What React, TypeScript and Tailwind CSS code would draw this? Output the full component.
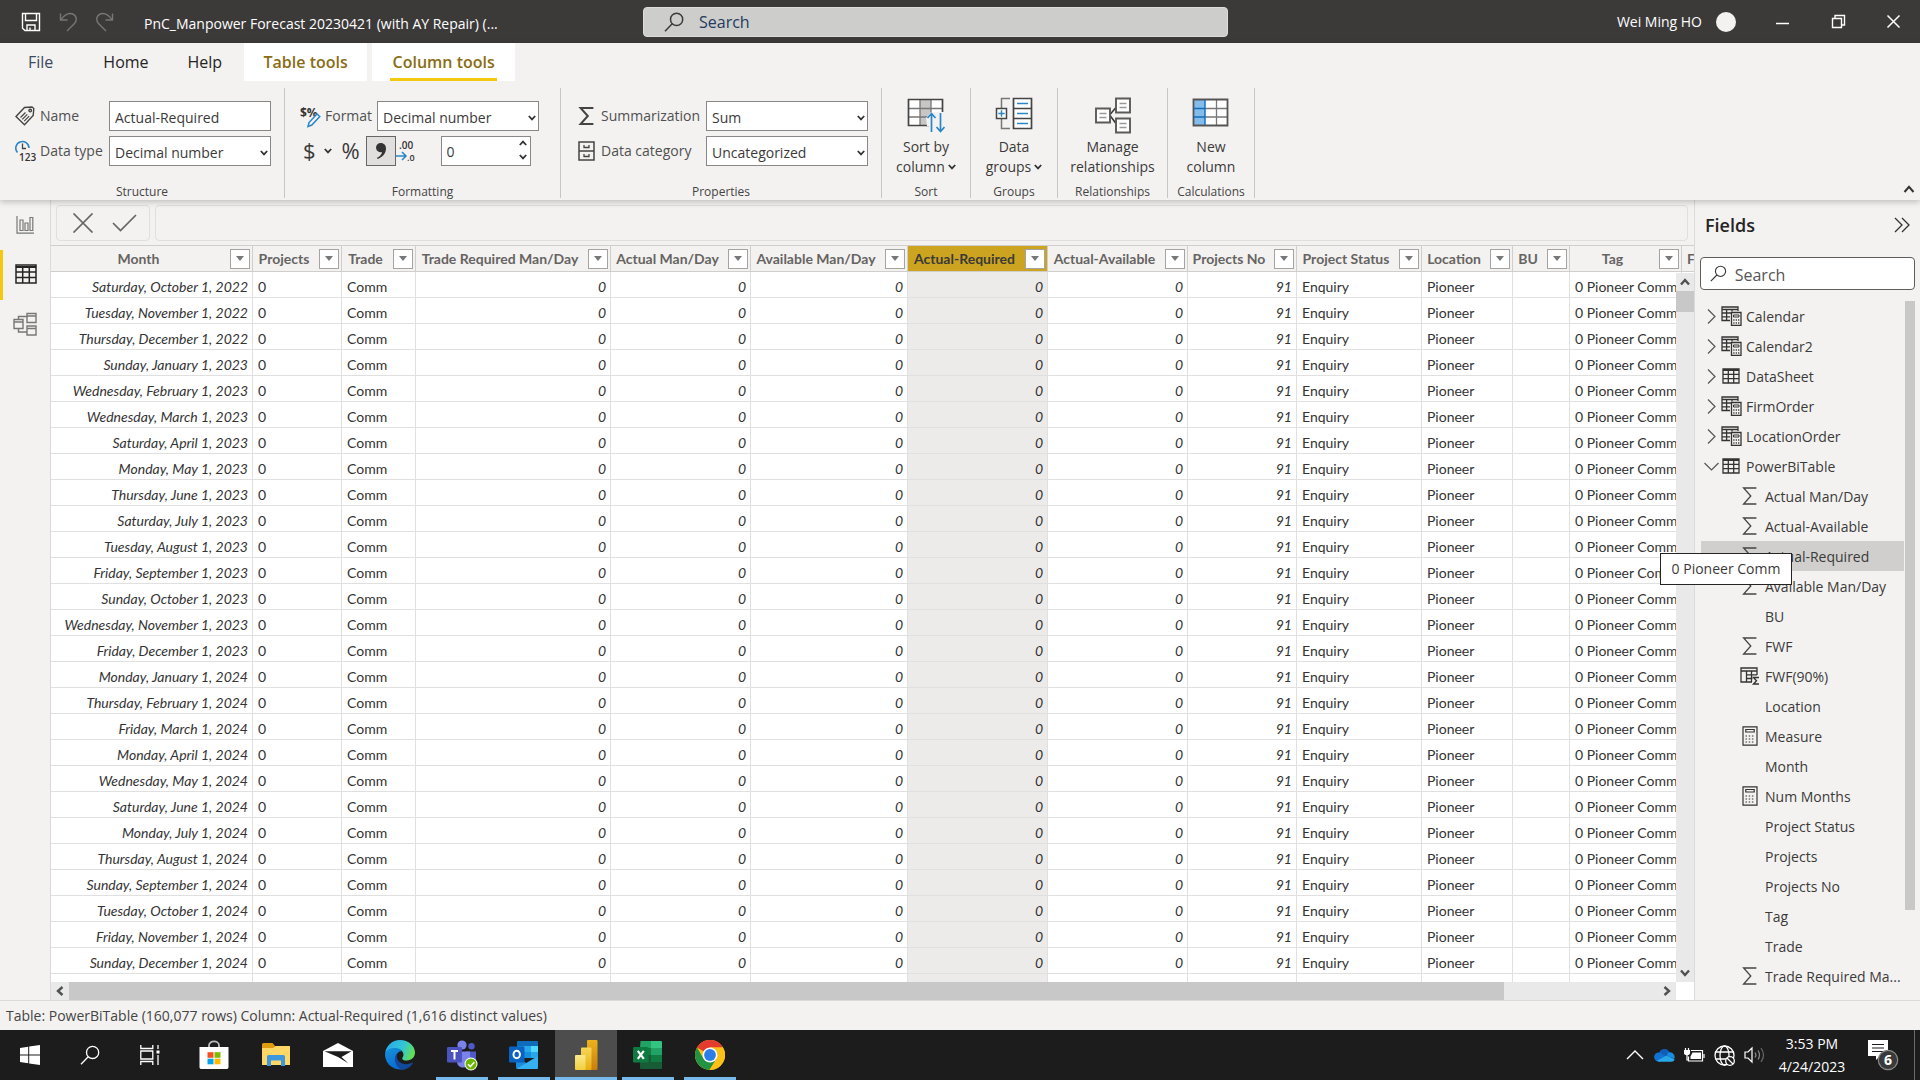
import React from "react";

/* ---------- shared glyphs ---------- */

function Chevron({ className = "" }: { className?: string }) {
  return (
    <svg className={className} width="8" height="6" viewBox="0 0 8 6" fill="none" stroke="#333" strokeWidth="1.8">
      <path d="M0.8 1 4 4.4 7.2 1" />
    </svg>
  );
}

function Sigma({ size = 18, width = 1.3, color = "#444" }: { size?: number; width?: number; color?: string }) {
  return (
    <svg width={size} height={size} viewBox="0 0 18 18" fill="none" stroke={color} strokeWidth={width}>
      <path d="M15.4 1H2.6L9.8 9 2.6 17h12.8" />
    </svg>
  );
}

function Magnifier({ size, color, width = 1.5 }: { size: number; color: string; width?: number }) {
  return (
    <svg width={size} height={size} viewBox="0 0 20 20" fill="none" stroke={color} strokeWidth={width}>
      <circle cx="12.6" cy="7.4" r="6.1" />
      <path d="M8.2 11.8 1 19.2" />
    </svg>
  );
}

/* ---------- title bar ---------- */

function TitleBar() {
  return (
    <header className="grid h-[43px] shrink-0 grid-cols-[1fr_585px_692px] items-center bg-[#3b3a39] text-sm text-white">
      <div className="flex min-w-0 items-center pl-[21px]">
        <button aria-label="Save" className="mr-[18px]">
          <svg width="20" height="20" viewBox="0 0 20 20" fill="none" stroke="#fff" strokeWidth="1.4">
            <path d="M1.5 1.5h17v17H4l-2.5-2.3z" />
            <path d="M4.5 1.5v7h11v-7M6 18.5v-5.5h8v5.5M9 18.5v-3" />
          </svg>
        </button>
        <button aria-label="Undo" className="mr-[17px]">
          <svg width="19" height="20" viewBox="0 0 19 20" fill="none" stroke="#777" strokeWidth="1.4">
            <path d="M1.5 1.5v6.5h7" />
            <path d="M1.8 7.8C5 3.5 9 0.8 13 1.8c4.500 1.2 5.500 6.200 2.500 9.700L8 19" />
          </svg>
        </button>
        <button aria-label="Redo" className="mr-[30px]">
          <svg width="19" height="20" viewBox="0 0 19 20" fill="none" stroke="#777" strokeWidth="1.4">
            <path d="M17.5 1.5v6.5h-7" />
            <path d="M17.2 7.8C14 3.500 10 0.800 6 1.800 1.500 3 0.500 8 3.500 11.500L11 19" />
          </svg>
        </button>
        <span className="truncate pt-1">PnC_Manpower Forecast 20230421 (with AY Repair) (...</span>
      </div>
      <label className="flex h-[30px] items-center rounded-sm border border-[#dddcda] bg-[#cdcdcb] pl-5">
        <Magnifier size={20} color="#3b3a39" />
        <input
          aria-label="Search"
          placeholder="Search"
          className="ml-[15px] min-w-0 flex-1 bg-transparent text-base text-[#243a5e] outline-none placeholder:text-[#243a5e]"
        />
      </label>
      <div className="flex items-center justify-end pr-[19px]">
        <button className="mr-[14px]">Wei Ming HO</button>
        <span className="mr-[39px] h-5 w-5 rounded-full bg-[#f3f2f1]" />
        <button aria-label="Minimize" className="mr-[41px]">
          <svg width="15" height="15" viewBox="0 0 15 15" stroke="#fff" strokeWidth="1.5">
            <path d="M1 9.500h13" />
          </svg>
        </button>
        <button aria-label="Restore" className="mr-[40px]">
          <svg width="15" height="15" viewBox="0 0 15 15" fill="none" stroke="#fff" strokeWidth="1.4">
            <path d="M1.500 4.500h9v9h-9zM4 4V1.500h9.500v9.500H11" />
          </svg>
        </button>
        <button aria-label="Close">
          <svg width="15" height="15" viewBox="0 0 15 15" stroke="#fff" strokeWidth="1.5">
            <path d="M1.500 1.500l12 12M13.500 1.500l-12 12" />
          </svg>
        </button>
      </div>
    </header>
  );
}

/* ---------- ribbon ---------- */

function RibbonTabs() {
  return (
    <nav className="flex h-[38px] items-stretch text-base text-[#252423]">
      <button className="ml-[28px] text-[#3b4a5e]">File</button>
      <button className="ml-[50px]">Home</button>
      <button className="ml-[39px]">Help</button>
      <button className="ml-[22px] w-[123px] bg-white font-semibold text-[#8a6d12]">Table tools</button>
      <button className="relative ml-[5px] w-[143px] bg-white font-semibold text-[#8a6d12]">
        Column tools
        <span className="absolute bottom-0 left-[18px] h-[3px] w-[107px] bg-[#f2c811]" />
      </button>
    </nav>
  );
}

function Group({ title, className, children }: { title: string; className: string; children: React.ReactNode }) {
  return (
    <section className={"flex h-[110px] flex-col border-r border-[#c8c6c4] " + className}>
      <div className="flex-1">{children}</div>
      <h2 className="text-center text-xs leading-3 text-[#444]">{title}</h2>
    </section>
  );
}

function SelectBox({ id, value }: { id: string; value: string }) {
  return (
    <div className="relative">
      <select
        id={id}
        defaultValue={value}
        className="block h-[30px] w-full appearance-none border border-[#8a8886] bg-white px-[5px] pt-[3px] text-sm text-[#3b3a39]"
      >
        <option>{value}</option>
      </select>
      <Chevron className="pointer-events-none absolute right-[3px] top-[14px]" />
    </div>
  );
}

function TagIcon() {
  return (
    <svg width="20" height="20" viewBox="0 0 20 20" fill="none" stroke="#444" strokeWidth="1.4">
      <path d="M1 10.500 9.500 1.500 17 1l1.800 1.500-.6 7L9.500 18.800z" />
      <path d="M5.500 11.500l5-5M7.300 13.300l5-5M9.200 15.200l5-5" strokeWidth="1.2" />
      <circle cx="15.200" cy="4.600" r="1.300" />
    </svg>
  );
}

function DataTypeIcon() {
  return (
    <svg width="21" height="26" viewBox="0 -2 21 26" fill="none">
      <path d="M2.500 12.500A6.600 6.600 0 1 1 14 8" stroke="#2a86c8" strokeWidth="1.600" />
      <path d="M7.500 3.500v5h3.500" stroke="#444" strokeWidth="1.300" />
      <text x="4" y="20.500" fontSize="10" fontWeight="600" fill="#333" fontFamily="Open Sans">123</text>
    </svg>
  );
}

function FormatIcon() {
  return (
    <svg width="21" height="26" viewBox="0 -4 21 26" fill="none">
      <text x="0" y="10" fontSize="12" fontWeight="700" fill="#333" fontFamily="Open Sans">$%</text>
      <path d="M8 19.500l1-4 8-8.500 2.800 2.500-8 8.500z" fill="#f3f2f1" stroke="#2a86c8" strokeWidth="1.500" />
    </svg>
  );
}

function CabinetIcon() {
  return (
    <svg width="17" height="20" viewBox="0 0 17 20" fill="none" stroke="#444" strokeWidth="1.5">
      <path d="M1 1h15v18H1zM1 10h15" />
      <path d="M6 4v2.500h5V4M6 13v2.500h5V13" strokeWidth="1.3" />
    </svg>
  );
}

function SortIcon() {
  return (
    <svg width="38" height="36" viewBox="0 0 38 36" fill="none">
      <path d="M1.500 2.500h34v26h-34z" fill="#fff" />
      <path d="M13 2h11v27H13z" fill="#c8c6c4" />
      <path d="M1.500 11.500h34M1.500 20h34M13 2v27M24 2v27" stroke="#777" strokeWidth="1.3" />
      <path d="M24 28.500H1.500v-26h34V16" stroke="#444" strokeWidth="1.7" />
      <path d="M19 21l5-6h13v21H22v-7h-2z" fill="#f3f2f1" />
      <path d="M24.500 35V16.500M20.500 21l4-4.500 4 4.500M33.500 16v18M29.500 30l4 4.500 4-4.500" stroke="#2a86c8" strokeWidth="1.7" />
    </svg>
  );
}

function GroupsIcon() {
  return (
    <svg width="38" height="36" viewBox="0 0 38 36" fill="none">
      <path d="M15 1.500H6.500v30H15" stroke="#777" strokeWidth="1.5" />
      <path d="M18.500 1.500h18v30h-18z" fill="#fff" stroke="#444" strokeWidth="1.7" />
      <path d="M18.500 11.500h18M18.500 21.500h18" stroke="#444" strokeWidth="1.7" />
      <path d="M22 6.500h11M22 16.500h11M22 26.500h11" stroke="#2a86c8" strokeWidth="1.5" />
      <path d="M1.500 11.500h10v10h-10z" fill="#fff" stroke="#444" strokeWidth="1.5" />
      <path d="M6.500 13.300v6.400M3.300 16.500h6.400" stroke="#2a86c8" strokeWidth="1.5" />
    </svg>
  );
}

function RelationsIcon() {
  return (
    <svg width="38" height="38" viewBox="0 0 38 38" fill="none" stroke="#5c5a58" strokeWidth="1.9">
      <path d="M16 17.500l6-7M16 18.500l6 8" stroke="#333" strokeWidth="1.5" />
      <path d="M2 11.500h14v14H2zM22 1.500h14v14H22zM22 21.500h14v14H22z" fill="#fff" />
      <path d="M5.500 16.500h7M5.500 20.500h7M25.500 6.500h7M25.500 10.500h7M25.500 26.500h7M25.500 30.500h7" stroke="#999" strokeWidth="1.3" />
    </svg>
  );
}

function NewColumnIcon() {
  return (
    <svg width="38" height="36" viewBox="0 0 38 36" fill="none">
      <path d="M1.500 2.500h34v26h-34z" fill="#fff" />
      <path d="M2 3h11v25H2z" fill="#84bdec" />
      <path d="M13 11.500h22.500M13 20h22.500M24.500 2v26.500" stroke="#777" strokeWidth="1.3" />
      <path d="M1.500 2.500h34v26h-34z" stroke="#555" strokeWidth="1.8" />
      <path d="M2 11.500h11M2 20h11M13 3v25" stroke="#0f6cbd" strokeWidth="1.4" />
    </svg>
  );
}

function BigButton({ icon, lines, menu }: { icon: React.ReactNode; lines: [string, string]; menu?: boolean }) {
  return (
    <button className="flex w-full flex-col items-center pt-[9px] text-sm leading-5 text-[#3b3a39]">
      <span className="flex h-10 items-start">{icon}</span>
      <span>{lines[0]}</span>
      <span className="flex items-center gap-[3px]">
        {lines[1]}
        {menu && <Chevron />}
      </span>
    </button>
  );
}

function Ribbon() {
  return (
    <div className="relative z-10 flex shrink-0 flex-col bg-[#f3f2f1] shadow-[0_2px_6px_rgba(0,0,0,0.22)]">
      <RibbonTabs />
      <div className="flex h-[119px] items-start pt-[7px]">
        <Group title="Structure" className="w-[285px]">
          <div className="grid grid-cols-[94px_162px] gap-y-[5px] pl-[15px] pt-[13px] text-sm text-[#505050]">
            <label htmlFor="name" className="flex h-[30px] items-center gap-[5px]"><TagIcon />Name</label>
            <input id="name" defaultValue="Actual-Required" className="h-[30px] min-w-0 border border-[#8a8886] bg-white px-[5px] pt-[3px] text-[#3b3a39]" />
            <label htmlFor="dtype" className="flex h-[30px] items-center gap-1 whitespace-nowrap"><DataTypeIcon />Data type</label>
            <SelectBox id="dtype" value="Decimal number" />
          </div>
        </Group>
        <Group title="Formatting" className="w-[276px]">
          <div className="grid grid-cols-[77px_162px] gap-y-[5px] pl-[15px] pt-[13px] text-sm text-[#505050]">
            <label htmlFor="format" className="flex h-[30px] items-center gap-1"><FormatIcon />Format</label>
            <SelectBox id="format" value="Decimal number" />
            <div className="col-span-2 flex h-[30px] items-center text-[#3b3a39]">
              <button aria-label="Currency" className="flex items-center gap-[8px] pl-[3px] text-[22px]">
                $<Chevron />
              </button>
              <button aria-label="Percentage" className="ml-[9px] w-[20px] text-[22px]">%</button>
              <button aria-label="Thousands separator" className="ml-[5px] flex h-[30px] w-[30px] items-center justify-center border border-[#666] bg-[#e1dfdd]">
                <svg width="12" height="18" viewBox="0 0 12 18" fill="#333">
                  <path d="M1 5.500a4.600 4.600 0 0 1 4.800-4.500C9 1 11 3.300 11 6.500c0 5-3.500 8.800-8.500 10.500l-.5-1.200c3-1.400 4.800-3.400 5-5.900A4.600 4.600 0 0 1 1 5.500z" />
                </svg>
              </button>
              <svg width="20" height="28" viewBox="0 -3 20 28" fill="none">
                <text x="3" y="9" fontSize="10" fontWeight="600" fill="#333" fontFamily="Open Sans">.00</text>
                <text x="11" y="21" fontSize="9" fontWeight="600" fill="#333" fontFamily="Open Sans">.0</text>
                <path d="M0 16h9.500M6 12l4 4-4 4" stroke="#2a86c8" strokeWidth="1.6" />
              </svg>
              <div className="relative ml-[25px]">
                <input aria-label="Decimal places" defaultValue="0" className="block h-[30px] w-[90px] border border-[#8a8886] bg-white px-[5px]" />
                <div className="absolute right-[4px] top-[4px] flex flex-col gap-[8px]">
                  <button aria-label="Increase" className="rotate-180"><Chevron /></button>
                  <button aria-label="Decrease"><Chevron /></button>
                </div>
              </div>
            </div>
          </div>
        </Group>
        <Group title="Properties" className="w-[321px]">
          <div className="grid grid-cols-[128px_162px] gap-y-[5px] pl-[17px] pt-[13px] text-sm text-[#505050]">
            <label htmlFor="sum" className="flex items-center gap-[5px]"><Sigma width={2} size={18} />Summarization</label>
            <SelectBox id="sum" value="Sum" />
            <label htmlFor="cat" className="flex items-center gap-[6px]"><CabinetIcon />Data category</label>
            <SelectBox id="cat" value="Uncategorized" />
          </div>
        </Group>
        <Group title="Sort" className="w-[89px]"><BigButton icon={<SortIcon />} lines={["Sort by", "column"]} menu /></Group>
        <Group title="Groups" className="w-[87px]"><BigButton icon={<GroupsIcon />} lines={["Data", "groups"]} menu /></Group>
        <Group title="Relationships" className="w-[110px]"><BigButton icon={<RelationsIcon />} lines={["Manage", "relationships"]} /></Group>
        <Group title="Calculations" className="w-[87px]"><BigButton icon={<NewColumnIcon />} lines={["New", "column"]} /></Group>
        <button aria-label="Collapse ribbon" className="mb-[6px] ml-auto mr-[5px] self-end">
          <svg width="12" height="10" viewBox="0 0 12 10" fill="none" stroke="#333" strokeWidth="2">
            <path d="M1.500 8 6 2.800 10.500 8" />
          </svg>
        </button>
      </div>
    </div>
  );
}

/* ---------- left navigation ---------- */

function ViewRail() {
  return (
    <nav className="flex w-[51px] shrink-0 flex-col border-r border-[#dcdad8] text-[#777]">
      <button aria-label="Report view" className="flex h-[50px] items-center justify-center pb-px">
        <svg width="18" height="18" viewBox="0 0 18 18" fill="none" stroke="currentColor" strokeWidth="1.2">
          <path d="M1 0v17.200h17M4 14.500V4h3v10.500zM9 14.500V7h3v7.500zM14 14.500V1.500h2.800v13z" />
        </svg>
      </button>
      <button aria-label="Data view" className="flex h-[50px] items-center justify-center border-l-[3px] border-[#f2c811] pb-[3px] pr-[2px] text-[#252423]">
        <svg width="22" height="20" viewBox="0 0 22 20" fill="none" stroke="currentColor" strokeWidth="1.5">
          <path d="M1 1h20v18H1z" />
          <path d="M1 3h20" strokeWidth="2" />
          <path d="M1 8h20M1 13.500h20M7.700 4v15M14.300 4v15" />
        </svg>
      </button>
      <button aria-label="Model view" className="flex h-[50px] items-center justify-center pb-[2px]">
        <svg width="24" height="24" viewBox="0 0 24 24" fill="none" stroke="currentColor" strokeWidth="1.4">
          <path d="M1 7.500h9v9H1zM14 1.500h9v9h-9zM14 14h9v9h-9zM1 10h9M14 4h9M14 16.500h9" />
          <path d="M5.500 7.500V4.500H14M5.500 16.500V20H14" />
        </svg>
      </button>
    </nav>
  );
}

/* ---------- data grid ---------- */

const columns: { name: string; width: string; kind: "date" | "text" | "num" }[] = [
  { name: "Month", width: "w-[202px]", kind: "date" },
  { name: "Projects", width: "w-[89px]", kind: "text" },
  { name: "Trade", width: "w-[74px]", kind: "text" },
  { name: "Trade Required Man/Day", width: "w-[195px]", kind: "num" },
  { name: "Actual Man/Day", width: "w-[140px]", kind: "num" },
  { name: "Available Man/Day", width: "w-[157px]", kind: "num" },
  { name: "Actual-Required", width: "w-[140px]", kind: "num" },
  { name: "Actual-Available", width: "w-[140px]", kind: "num" },
  { name: "Projects No", width: "w-[109px]", kind: "num" },
  { name: "Project Status", width: "w-[125px]", kind: "text" },
  { name: "Location", width: "w-[91px]", kind: "text" },
  { name: "BU", width: "w-[57px]", kind: "text" },
  { name: "Tag", width: "w-[112px]", kind: "text" },
];

const months = [
  "Saturday, October 1, 2022", "Tuesday, November 1, 2022", "Thursday, December 1, 2022",
  "Sunday, January 1, 2023", "Wednesday, February 1, 2023", "Wednesday, March 1, 2023",
  "Saturday, April 1, 2023", "Monday, May 1, 2023", "Thursday, June 1, 2023",
  "Saturday, July 1, 2023", "Tuesday, August 1, 2023", "Friday, September 1, 2023",
  "Sunday, October 1, 2023", "Wednesday, November 1, 2023", "Friday, December 1, 2023",
  "Monday, January 1, 2024", "Thursday, February 1, 2024", "Friday, March 1, 2024",
  "Monday, April 1, 2024", "Wednesday, May 1, 2024", "Saturday, June 1, 2024",
  "Monday, July 1, 2024", "Thursday, August 1, 2024", "Sunday, September 1, 2024",
  "Tuesday, October 1, 2024", "Friday, November 1, 2024", "Sunday, December 1, 2024",
];

const rows = months.map((m) => [m, "0", "Comm", "0", "0", "0", "0", "0", "91", "Enquiry", "Pioneer", "", "0 Pioneer Comm"]);
rows.push(columns.map(() => ""));

function ScrollArrow({ label, turn }: { label: string; turn: string }) {
  return (
    <button aria-label={label} className="flex h-[18px] w-[18px] shrink-0 items-center justify-center">
      <svg className={turn} width="10" height="8" viewBox="0 0 10 8" fill="none" stroke="#505050" strokeWidth="2.4">
        <path d="M1 6.500 5 2l4 4.500" />
      </svg>
    </button>
  );
}

function DataGrid() {
  return (
    <div className="mt-[4px] flex min-h-0 flex-1 flex-col">
      <div className="relative min-h-0 flex-1 overflow-hidden bg-white font-['Lato','Open_Sans',sans-serif]">
        <table className="w-[1831px] table-fixed border-separate border-spacing-0 text-sm leading-5">
          <colgroup>
            {columns.map((c) => <col key={c.name} className={c.width} />)}
            <col className="w-[200px]" />
          </colgroup>
          <thead>
            <tr>
              {columns.map((c) => (
                <th
                  key={c.name}
                  className={
                    "h-[27px] border-y border-r border-[#d0cecc] p-0 font-bold " +
                    (c.name === "Actual-Required" ? "bg-[#cca420] text-[#3b3a39]" : "bg-[#f3f2f1] text-[#666462]")
                  }
                >
                  <div className="flex items-center pr-[2px]">
                    <span className="flex-1 whitespace-nowrap pr-1 text-center">{c.name}</span>
                    <button aria-label={"Filter " + c.name} className="flex h-[20px] w-[20px] items-center justify-center border border-[#a6a4a2] bg-white">
                      <svg width="8" height="5" viewBox="0 0 8 5" fill="#777"><path d="M0 0h8L4 5z" /></svg>
                    </button>
                  </div>
                </th>
              ))}
              <th className="border-y border-[#d0cecc] bg-[#f3f2f1] p-0 pl-[5px] text-left font-bold text-[#666462]">F</th>
            </tr>
          </thead>
          <tbody className="text-[#333]">
            {rows.map((r, i) => (
              <tr key={i}>
                {r.map((v, j) => (
                  <td
                    key={j}
                    className={
                      "h-[26px] whitespace-nowrap border-b border-r border-[#e0e0e0] p-0 pt-[4px] " +
                      (columns[j].kind === "text" ? "pl-[5px] " : "pr-[4px] text-right italic ") +
                      (j === 6 ? "bg-[#ecebea]" : "bg-white")
                    }
                  >
                    {v}
                  </td>
                ))}
              </tr>
            ))}
          </tbody>
        </table>
        <div className="absolute bottom-0 right-0 top-[28px] flex w-[18px] flex-col bg-[#e9e9e9]">
          <ScrollArrow label="Scroll up" turn="" />
          <div className="h-[21px] bg-[#c8c8c8]" />
          <div className="flex-1" />
          <ScrollArrow label="Scroll down" turn="rotate-180" />
        </div>
      </div>
      <div className="flex h-[18px] shrink-0 bg-white pr-[18px]">
        <div className="flex flex-1 bg-[#e9e9e9]">
          <ScrollArrow label="Scroll left" turn="-rotate-90" />
          <div className="flex flex-1"><div className="w-[90.3%] bg-[#c8c8c8]" /></div>
          <ScrollArrow label="Scroll right" turn="rotate-90" />
        </div>
      </div>
    </div>
  );
}

function Workspace() {
  return (
    <main className="flex min-w-0 flex-1 flex-col">
      <div className="mt-[5px] flex h-[36px] shrink-0 gap-[5px] pl-[5px] pr-[6px]">
        <div className="flex w-[94px] items-center gap-[18px] rounded-sm border border-[#e1dfdd] pl-[15px]">
          <button aria-label="Cancel">
            <svg width="22" height="20" viewBox="0 0 22 20" stroke="#666" strokeWidth="1.7"><path d="M1.500 0.500l19 19M20.500 0.500l-19 19" /></svg>
          </button>
          <button aria-label="Commit">
            <svg width="25" height="18" viewBox="0 0 25 18" fill="none" stroke="#666" strokeWidth="1.7"><path d="M1 9l7.500 7.500L24 1" /></svg>
          </button>
        </div>
        <input aria-label="Formula" className="min-w-0 flex-1 rounded-sm border border-[#e1dfdd] bg-transparent" />
      </div>
      <DataGrid />
    </main>
  );
}

/* ---------- fields pane ---------- */

function TableIcon() {
  return (
    <svg width="18" height="16" viewBox="0 0 18 16" fill="none" stroke="#333" strokeWidth="1.3">
      <path d="M1 1h16v14H1z" />
      <path d="M1 2h16" strokeWidth="2" />
      <path d="M1 6.300h16M1 10.600h16M6.300 2v13M11.700 2v13" />
    </svg>
  );
}

function CalcTableIcon() {
  return (
    <svg width="21" height="20" viewBox="0 0 21 20" fill="none" stroke="#333" strokeWidth="1.3">
      <path d="M17 5V1H1v13.500h8M1 3.500h16M1 7h9M1 10.800h8M5.600 3.500v11M11 3.500v2" />
      <path d="M10.500 6.500h9.500v13h-9.500z" fill="#f3f2f1" />
      <path d="M12.500 9h5.500v2h-5.500z" strokeWidth="1" />
      <path d="M12.300 14h6M12.300 17h6" strokeDasharray="1.2 1.2" />
    </svg>
  );
}

function CalculatorIcon() {
  return (
    <svg width="16" height="20" viewBox="0 0 16 20" fill="none" stroke="#333" strokeWidth="1.2">
      <path d="M1 .8h14v18.400H1zM3.800 3.500h8.400v2.500H3.800z" />
      <path d="M3.500 10h9.500M3.500 13h9.500M3.500 16h9.500" strokeDasharray="1.5 1.7" />
    </svg>
  );
}

function CalcColumnIcon() {
  return (
    <svg width="20" height="18" viewBox="0 0 20 18" fill="none" stroke="#333" strokeWidth="1.3">
      <path d="M17 8V1H1v14h11M1 4h16M6.500 4v11M11.500 4v11M6.500 7.800H17M6.500 11.500h6" />
      <path d="M19 10.500h-5.500l3 3.200-3 3.300H19" strokeWidth="1.4" />
    </svg>
  );
}

const tables: [string, "calc" | "table"][] = [
  ["Calendar", "calc"], ["Calendar2", "calc"], ["DataSheet", "table"],
  ["FirmOrder", "calc"], ["LocationOrder", "calc"], ["PowerBiTable", "table"],
];

const fields: [string, "sum" | "column" | "measure" | "none"][] = [
  ["Actual Man/Day", "sum"], ["Actual-Available", "sum"], ["Actual-Required", "sum"],
  ["Available Man/Day", "sum"], ["BU", "none"], ["FWF", "sum"], ["FWF(90%)", "column"],
  ["Location", "none"], ["Measure", "measure"], ["Month", "none"], ["Num Months", "measure"],
  ["Project Status", "none"], ["Projects", "none"], ["Projects No", "none"], ["Tag", "none"],
  ["Trade", "none"], ["Trade Required Ma...", "sum"],
];

function FieldsPane() {
  return (
    <aside className="relative flex w-[226px] shrink-0 flex-col border-l border-[#dcdad8] text-[#3b3a39]">
      <div className="flex h-[57px] shrink-0 items-center justify-between pb-[7px] pl-[10px] pr-[10px]">
        <h2 className="text-lg font-semibold text-[#252423]">Fields</h2>
        <button aria-label="Collapse pane">
          <svg width="16" height="16" viewBox="0 0 16 16" fill="none" stroke="#333" strokeWidth="1.3">
            <path d="M1 1l7 7-7 7M8 1l7 7-7 7" />
          </svg>
        </button>
      </div>
      <label className="mx-[5px] flex h-[33px] shrink-0 items-center rounded-sm border border-[#605e5c] bg-white pl-[9px]">
        <Magnifier size={19} color="#333" width={1.3} />
        <input aria-label="Search fields" placeholder="Search" className="ml-[8px] w-full min-w-0 bg-transparent pt-[2px] text-base outline-none placeholder:text-[#555]" />
      </label>
      <div className="mt-[11px] flex min-h-0 flex-1 pl-[6px] pr-[5px]">
        <ul className="min-w-0 flex-1 text-sm">
          {tables.map(([name, kind], i) => (
            <li key={name}>
              <button className="flex h-[30px] w-full items-center">
                <span className="flex w-[20px] justify-center">
                  {i === 5 ? (
                    <svg width="15" height="9" viewBox="0 0 15 9" fill="none" stroke="#555" strokeWidth="1.2"><path d="M.5 1l7 7 7-7" /></svg>
                  ) : (
                    <svg width="9" height="15" viewBox="0 0 9 15" fill="none" stroke="#555" strokeWidth="1.2"><path d="M1 .5l7 7-7 7" /></svg>
                  )}
                </span>
                <span className="flex w-[25px]">{kind === "calc" ? <CalcTableIcon /> : <span className="pl-px"><TableIcon /></span>}</span>
                <span className="pt-px">{name}</span>
              </button>
            </li>
          ))}
          {fields.map(([name, kind]) => (
            <li key={name}>
              <button className={"flex h-[30px] w-full items-center whitespace-nowrap pl-[39px] " + (name === "Actual-Required" ? "bg-[#d0cfcd]" : "")}>
                <span className="mr-[5px] flex w-[20px] shrink-0 justify-center">
                  {kind === "sum" && <Sigma />}
                  {kind === "measure" && <CalculatorIcon />}
                  {kind === "column" && <CalcColumnIcon />}
                </span>
                <span className="pt-px">{name}</span>
              </button>
            </li>
          ))}
        </ul>
        <div className="ml-px h-[609px] w-[10px] bg-[#c8c8c8]" />
      </div>
      <div role="tooltip" className="absolute left-[-35px] top-[353px] flex h-[32px] w-[132px] items-center justify-center whitespace-nowrap border border-[#252423] bg-white text-sm">
        0 Pioneer Comm
      </div>
    </aside>
  );
}

/* ---------- taskbar ---------- */

function WindowsIcon() {
  return (
    <svg width="20" height="20" viewBox="0 0 20 20" fill="#fff">
      <path d="M0 3l8.200-1.200v7.700H0zM9.200 1.600 20 0v9.500H9.200zM0 10.500h8.200v7.700L0 17zM9.200 10.500H20V20L9.200 18.400z" />
    </svg>
  );
}

function TaskViewIcon() {
  return (
    <svg width="20" height="20" viewBox="0 0 20 20" fill="none" stroke="#fff" strokeWidth="1.3">
      <path d="M.8 0v3.500h12V0M.8 6h12v8h-12zM.8 20v-3.500h12V20M18 0v4M18 10v10" />
      <path d="M16.500 5.500h3v3h-3z" fill="#fff" stroke="none" />
    </svg>
  );
}

function StoreIcon() {
  return (
    <svg width="30" height="30" viewBox="0 0 30 30">
      <path d="M10 8V5.500C10 0 20 0 20 5.500V8" fill="none" stroke="#bbb" strokeWidth="1.8" />
      <path d="M.5 7h29v20.500a2 2 0 0 1-2 1.500h-25a2 2 0 0 1-2-1.500z" fill="#fff" />
      <path d="M8.500 12.200h6v5.600h-6z" fill="#f25022" />
      <path d="M15.500 12.200h6v5.600h-6z" fill="#7fba00" />
      <path d="M8.500 18.700h6v5.600h-6z" fill="#00a4ef" />
      <path d="M15.500 18.700h6v5.600h-6z" fill="#ffb900" />
    </svg>
  );
}

function FolderIcon() {
  return (
    <svg width="28" height="24" viewBox="0 0 28 24">
      <path d="M0 1.500A1.500 1.500 0 0 1 1.500 0h9L13 3h15v4H0z" fill="#e09c0f" />
      <path d="M0 5h11l3-2h13a1 1 0 0 1 1 1v18H0z" fill="#ffd766" />
      <path d="M5 23V13.500a1.500 1.500 0 0 1 1.500-1.500h15a1.500 1.500 0 0 1 1.500 1.500V23h-4v-5.500H9V23z" fill="#3d97dc" />
    </svg>
  );
}

function MailIcon() {
  return (
    <svg width="30" height="24" viewBox="0 0 30 24">
      <path d="M0 8 15 0l15 8v16H0z" fill="#fff" />
      <path d="M1.500 8.300h27L18.500 14l7 6.500L15 14z" fill="#1c1c1c" />
    </svg>
  );
}

function EdgeIcon() {
  return (
    <svg width="30" height="30" viewBox="0 0 30 30">
      <defs>
        <linearGradient id="edgeTop" x1="0" y1="0.3" x2="1" y2="0.6">
          <stop offset="0" stopColor="#2aa9ea" /><stop offset="0.55" stopColor="#32c6d6" /><stop offset="1" stopColor="#66e04a" />
        </linearGradient>
        <linearGradient id="edgeBody" x1="0" y1="0" x2="0.5" y2="1">
          <stop offset="0" stopColor="#1592dc" /><stop offset="1" stopColor="#0a6bd0" />
        </linearGradient>
      </defs>
      <path d="M.2 13.500C.8 6 7 0 15 0c8.500 0 15 6 15 12.600 0 5-3.800 7.900-8 7.900-3.300 0-4.800-1.200-4.800-2.100 0-.8 1.300-1.300 1.300-3.800 0-3-3-5.800-7-5.800C5.500 8.800 1.500 11 .2 13.500z" fill="url(#edgeTop)" />
      <path d="M0 15C0 10.500 5 7.500 9.500 8c3.500 0 6 1.200 7.500 3-3.500 0-6.800 3.500-6.500 8 .4 5.500 5 9.500 9.500 9.600A15 15 0 0 1 0 15z" fill="url(#edgeBody)" />
      <path d="M12 13.500c-3.500 4-3 12 4.500 16.400 4.500 0 9-2.500 11.300-6.600.2-.5-.2-.7-.6-.5-6 3-13.700 1-15.200-4.500-.4-1.600-.3-3.300 0-4.800z" fill="#114a9c" />
    </svg>
  );
}

function TeamsIcon() {
  return (
    <svg width="32" height="32" viewBox="0 0 32 32">
      <circle cx="16" cy="6" r="4.6" fill="#7b83eb" />
      <circle cx="25.500" cy="7.300" r="3.200" fill="#5059c9" />
      <path d="M20 12.500h10v8a5 5 0 0 1-10 3z" fill="#5059c9" />
      <path d="M11 12.500h13v10c0 4-3 6-6.500 6s-6.500-2-6.500-6z" fill="#7b83eb" />
      <rect x="1" y="8" width="15" height="15.500" rx="1.300" fill="#4b53bc" />
      <path d="M5 12h7M8.500 12v8.500" stroke="#fff" strokeWidth="2" />
      <circle cx="25" cy="25" r="6.500" fill="#fff" />
      <circle cx="25" cy="25" r="5.500" fill="#6bb700" />
      <path d="M22 25.200l2.300 2.300 4-4.200" fill="none" stroke="#fff" strokeWidth="1.6" />
    </svg>
  );
}

function OutlookIcon() {
  return (
    <svg width="30" height="28" viewBox="0 0 30 28">
      <path d="M8 1a1 1 0 0 1 1-1h19a1 1 0 0 1 1 1v16H8z" fill="#0f6cbd" />
      <path d="M8 5h7v6H8zM15 11h7v6h-7z" fill="#1490df" />
      <path d="M15 5h7v6h-7z" fill="#28a8ea" />
      <path d="M22 5h7v6h-7z" fill="#50d9ff" />
      <path d="M22 11h7v6h-7z" fill="#28a8ea" />
      <path d="M7 16l11 6.500L29 15v11.500a1.500 1.500 0 0 1-1.500 1.500h-19A1.500 1.500 0 0 1 7 26.500z" fill="#1a8bdd" />
      <path d="M8 27.500 29 15v11.500a1.500 1.500 0 0 1-1.500 1.500h-19z" fill="#35b1f1" />
      <rect x="0" y="5.500" width="15.500" height="16" rx="1.300" fill="#0a63c0" />
      <ellipse cx="7.700" cy="13.500" rx="3.200" ry="3.800" fill="none" stroke="#fff" strokeWidth="2" />
    </svg>
  );
}

function PowerBiIcon() {
  return (
    <svg width="24" height="30" viewBox="0 0 24 30">
      <defs>
        <linearGradient id="pbBack" x1="0" y1="0" x2="0" y2="1"><stop offset="0" stopColor="#ecb31b" /><stop offset="1" stopColor="#c87d0e" /></linearGradient>
        <linearGradient id="pbMid" x1="0" y1="0" x2="0" y2="1"><stop offset="0" stopColor="#f8d659" /><stop offset="1" stopColor="#e6ad10" /></linearGradient>
        <linearGradient id="pbFront" x1="0" y1="0" x2="0" y2="1"><stop offset="0" stopColor="#fae88a" /><stop offset="1" stopColor="#f2ce3c" /></linearGradient>
      </defs>
      <rect x="13" y="0" width="10.5" height="30" rx="1" fill="url(#pbBack)" />
      <rect x="7" y="7.5" width="10.5" height="22.5" rx="1" fill="url(#pbMid)" />
      <rect x="1" y="15" width="10.5" height="15" rx="1" fill="url(#pbFront)" />
    </svg>
  );
}

function ExcelIcon() {
  return (
    <svg width="30" height="28" viewBox="0 0 30 28">
      <path d="M7.500 0H18v7H7z" fill="#21a366" />
      <path d="M18 0h10a1 1 0 0 1 1 1v6H18z" fill="#33c481" />
      <path d="M7 7h11v7H7z" fill="#107c41" />
      <path d="M18 7h11v7H18z" fill="#21a366" />
      <path d="M7 14h11v7H7z" fill="#185c37" />
      <path d="M18 14h11v7H18z" fill="#107c41" />
      <path d="M7 21h22v6a1 1 0 0 1-1 1H8a1 1 0 0 1-1-1z" fill="#185c37" />
      <rect x="0" y="6" width="15.5" height="15.5" rx="1.3" fill="#0f7a40" />
      <path d="M4.800 9.800l6 8M10.800 9.800l-6 8" stroke="#fff" strokeWidth="2.2" />
    </svg>
  );
}

function ChromeIcon() {
  return (
    <svg width="30" height="30" viewBox="0 0 30 30">
      <circle cx="15" cy="15" r="15" fill="#fbc116" />
      <path d="M15 15 2 7.500A15 15 0 0 1 28 7.500H15z" fill="#e33b2e" />
      <path d="M2 7.500A15 15 0 0 0 14.500 30L21.500 18.700 8.500 18.700z" fill="#229342" />
      <path d="M28 7.500H15l6.500 11.200L14.500 30A15 15 0 0 0 28 7.500z" fill="#fbc116" />
      <circle cx="15" cy="15" r="7.5" fill="#fff" />
      <circle cx="15" cy="15" r="5.9" fill="#2b7de9" />
    </svg>
  );
}

const apps: { name: string; icon: React.ReactNode; state: "idle" | "open" | "active" }[] = [
  { name: "Microsoft Store", icon: <StoreIcon />, state: "idle" },
  { name: "File Explorer", icon: <FolderIcon />, state: "idle" },
  { name: "Mail", icon: <MailIcon />, state: "idle" },
  { name: "Edge", icon: <EdgeIcon />, state: "idle" },
  { name: "Teams", icon: <TeamsIcon />, state: "open" },
  { name: "Outlook", icon: <OutlookIcon />, state: "open" },
  { name: "Power BI", icon: <PowerBiIcon />, state: "active" },
  { name: "Excel", icon: <ExcelIcon />, state: "open" },
  { name: "Chrome", icon: <ChromeIcon />, state: "open" },
];

function Taskbar() {
  return (
    <footer className="flex h-[50px] shrink-0 items-stretch bg-[#1c1c1c] text-white">
      <button aria-label="Start" className="flex w-[60px] items-center justify-center"><WindowsIcon /></button>
      <button aria-label="Search" className="flex w-[60px] items-center justify-center"><Magnifier size={20} color="#fff" width={1.3} /></button>
      <button aria-label="Task view" className="mr-[3px] flex w-[60px] items-center justify-center"><TaskViewIcon /></button>
      {apps.map((a) => (
        <button key={a.name} aria-label={a.name} className={"relative flex w-[62px] items-center justify-center " + (a.state === "active" ? "bg-[#4d4d4d]" : "")}>
          {a.icon}
          {a.state !== "idle" && (
            <span className={"absolute bottom-0 h-[3px] bg-[#76b9ed] " + (a.state === "active" ? "inset-x-0" : "inset-x-[5px]")} />
          )}
        </button>
      ))}
      <div className="ml-auto flex items-center">
        <button aria-label="Show hidden icons" className="mr-[10px]">
          <svg width="18" height="10" viewBox="0 0 18 10" fill="none" stroke="#fff" strokeWidth="1.4"><path d="M1 9l8-8 8 8" /></svg>
        </button>
        <svg className="mr-[9px]" width="21" height="14" viewBox="0 0 21 14">
          <path d="M5 5.500A5.500 5.500 0 0 1 15.500 4.500L12 9z" fill="#0f5fb8" />
          <path d="M14 4.500a5 5 0 0 1 6.500 6L13 8z" fill="#1b8ce3" />
          <path d="M5 13.500A4.500 4.500 0 1 1 7 5.200l9 6z" fill="#1173cf" />
          <path d="M3 12.800 12.500 7.500l8 3.500a3 3 0 0 1-3 2.700H5a4 4 0 0 1-2-.9z" fill="#28a8ea" />
        </svg>
        <svg className="mr-[9px]" width="21" height="14" viewBox="0 0 21 14" fill="none" stroke="#fff" strokeWidth="1.2">
          <path d="M1.500 0v2.500M4.500 0v2.500M3 6.500v5.500h1.500" />
          <path d="M0.500 2.500h5v2.500a2 2 0 0 1-2.500 1.500 2 2 0 0 1-2.500-1.500z" fill="#fff" />
          <path d="M7 2.500h11.500v10.500H4.500V8.500" />
          <path d="M8.500 4.500H17v6.500H6.500V8.500z" fill="#fff" stroke="none" />
          <path d="M20 6v4" />
        </svg>
        <svg className="mr-[9px]" width="21" height="21" viewBox="0 0 21 21" fill="none" stroke="#fff" strokeWidth="1.3">
          <circle cx="10.500" cy="10.500" r="9.500" />
          <ellipse cx="10.500" cy="10.500" rx="4.500" ry="9.500" />
          <path d="M1.500 7h18M1.500 14h18" />
          <circle cx="16" cy="16" r="4.300" fill="#1c1c1c" />
          <path d="M13 13l6 6" />
        </svg>
        <svg className="mr-[11px]" width="22" height="18" viewBox="0 0 22 18" fill="none" stroke="#fff" strokeWidth="1.2">
          <path d="M1 6h3l4-4v14l-4-4H1z" />
          <path d="M11 6.500q1.800 2.500 0 5M14 4.500q3 4.500 0 9" stroke="#8a8a8a" />
          <path d="M17 2q5 7 0 14" stroke="#6a6a6a" />
        </svg>
        <div className="flex w-[70px] flex-col items-center text-sm leading-[23px]">
          <span>3:53 PM</span>
          <span>4/24/2023</span>
        </div>
        <button aria-label="Notifications" className="ml-[21px] mr-[15px]">
          <svg width="31" height="32" viewBox="0 0 31 32">
            <path d="M0 1h20v16h-8l-4 4v-4H0z" fill="#fff" />
            <path d="M4 5.500h12M4 9h12M4 12.500h12" stroke="#1c1c1c" strokeWidth="1.2" />
            <circle cx="20" cy="21" r="9.700" fill="#3a3a3a" stroke="#8a8a8a" strokeWidth="1.2" />
            <text x="20" y="26" textAnchor="middle" fontSize="14" fontWeight="700" fill="#fff" fontFamily="Open Sans">6</text>
          </svg>
        </button>
        <span className="mr-[5px] h-[50px] w-px bg-[#6a6a6a]" />
      </div>
    </footer>
  );
}

export default function App() {
  return (
    <div className="flex h-screen flex-col overflow-hidden bg-[#f3f2f1] font-['Open_Sans','Noto_Sans',sans-serif]">
      <TitleBar />
      <Ribbon />
      <div className="flex min-h-0 flex-1">
        <ViewRail />
        <Workspace />
        <FieldsPane />
      </div>
      <div className="flex h-[30px] shrink-0 items-center border-t border-[#dcdad8] pl-[6px] text-sm text-[#444]">
        Table: PowerBiTable (160,077 rows) Column: Actual-Required (1,616 distinct values)
      </div>
      <Taskbar />
    </div>
  );
}
